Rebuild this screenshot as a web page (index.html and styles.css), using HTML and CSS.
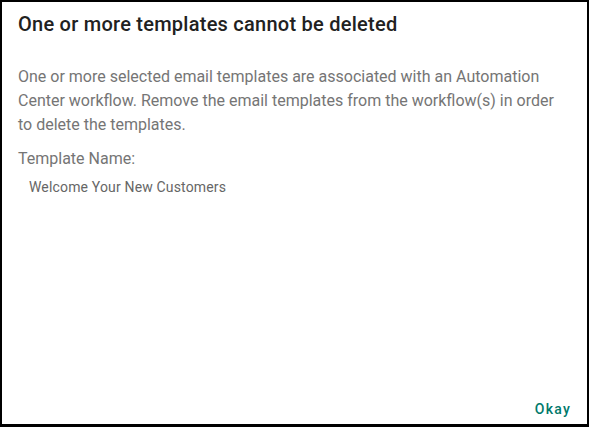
FILE: index.html
```html
<!DOCTYPE html>
<html lang="en">
<head>
<meta charset="utf-8">
<title>Cannot delete templates</title>
<link rel="stylesheet" href="styles.css">
</head>
<body>
<div class="dialog" role="dialog" aria-labelledby="dlg-title">
  <div class="content">
    <h2 class="title" id="dlg-title">One or more templates cannot be deleted</h2>
    <p class="message">One or more selected email templates are associated with an Automation Center workflow. Remove the email templates from the workflow(s) in order to delete the templates.</p>
    <div class="label">Template Name:</div>
    <ul class="names">
      <li>Welcome Your New Customers</li>
    </ul>
  </div>
  <div class="actions">
    <button class="btn" type="button">Okay</button>
  </div>
</div>
</body>
</html>
```
FILE: styles.css
```css
* { box-sizing: border-box; }
html, body { margin: 0; padding: 0; background: #fff; }
body { font-family: Roboto, "Noto Sans", "Liberation Sans", sans-serif; }

.dialog {
  width: 589px;
  height: 427px;
  border: 2px solid #000;
  border-bottom-width: 3px;
  display: flex;
  flex-direction: column;
  background: #fff;
}

.content {
  flex: 1;
  padding: 8px 16px 0;
}

.title {
  margin: 0 0 26.5px;
  font-size: 20px;
  line-height: 28px;
  font-weight: 500;
  letter-spacing: 0.25px;
  color: #212121;
}

.message {
  margin: 0;
  font-size: 16px;
  line-height: 24px;
  color: #757575;
}

.label {
  margin-top: 10px;
  font-size: 16px;
  line-height: 24px;
  color: #757575;
}

.names {
  list-style: none;
  margin: 6px 0 0;
  padding: 0 0 0 11px;
  font-size: 14px;
  line-height: 20px;
  letter-spacing: 0.16px;
  color: #666;
}

.actions {
  display: flex;
  justify-content: flex-end;
  padding: 0 8px 1px;
}

.btn {
  border: 0;
  background: transparent;
  padding: 4px 8px;
  font-family: inherit;
  font-size: 14px;
  line-height: 20px;
  font-weight: 500;
  letter-spacing: 1.25px;
  color: #00796b;
  cursor: pointer;
}
```
